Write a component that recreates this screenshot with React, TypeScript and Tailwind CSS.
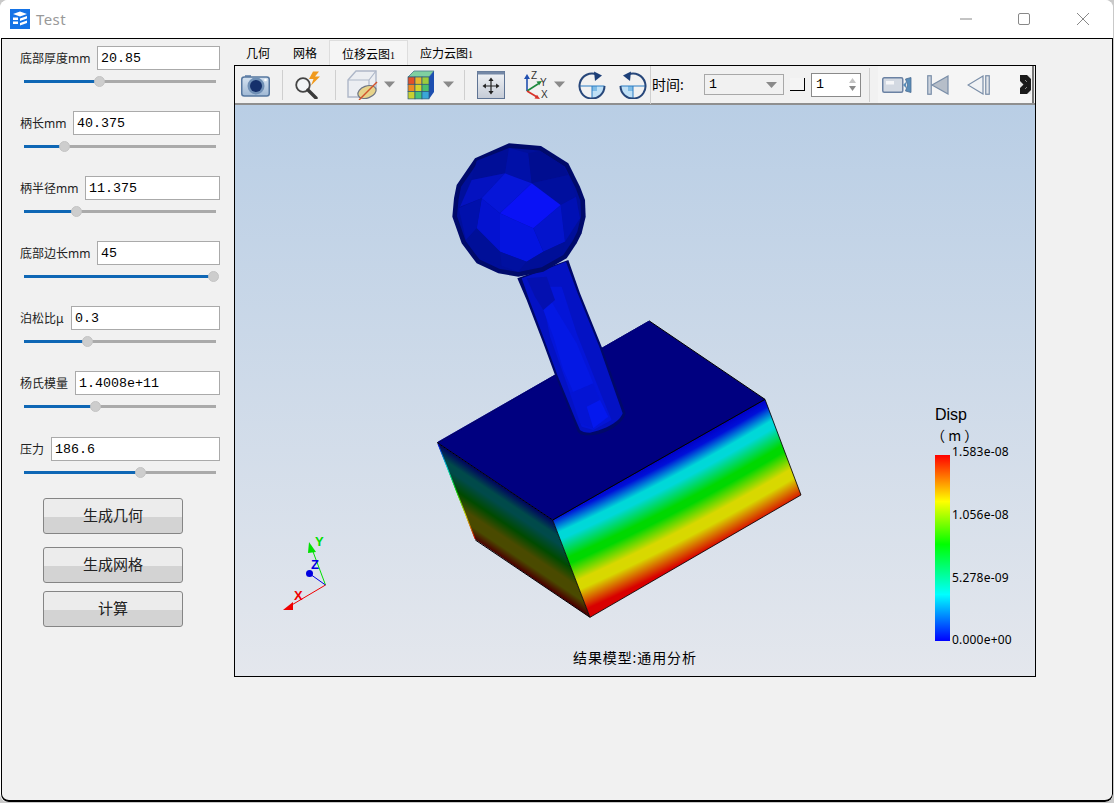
import { useState } from "react";

const fields = [
  { label: "底部厚度mm", value: "20.85", inputLeft: 97, handle: 99 },
  { label: "柄长mm", value: "40.375", inputLeft: 73, handle: 64 },
  { label: "柄半径mm", value: "11.375", inputLeft: 85, handle: 76 },
  { label: "底部边长mm", value: "45", inputLeft: 97, handle: 213 },
  { label: "泊松比μ", value: "0.3", inputLeft: 71, handle: 87 },
  { label: "杨氏模量", value: "1.4008e+11", inputLeft: 75, handle: 95 },
  { label: "压力", value: "186.6", inputLeft: 51, handle: 140 },
];

const ballOutline =
  "237,40 333,48 415,100 450,170 465,210 467,260 455,310 440,340 410,385 340,425 265,440 205,430 140,400 125,380 95,340 67,260 72,205 80,165 135,85";

// t runs from the top edge of the block's front face to its bottom edge
const bandStop = (t: number) => `${((6000 + 309 * t) / 6309) * 100}%`;

const frontBands: [number, string][] = [
  [0, "#0000c8"],
  [0.07, "#0010d8"],
  [0.21, "#00d8d8"],
  [0.28, "#00d8d8"],
  [0.47, "#00d800"],
  [0.53, "#00d800"],
  [0.71, "#d8d800"],
  [0.8, "#d8d800"],
  [1, "#d80000"],
];

function Field({ label, value, inputLeft, handle, last }: { label: string; value: string; inputLeft: number; handle: number; last: boolean }) {
  const [text, setText] = useState(value);
  const pos = handle - 24;
  return (
    <div className={last ? "mt-px" : ""}>
      <div className="flex items-center h-6">
        <span className="shrink-0 pt-px text-[12px] text-[#222] whitespace-nowrap" style={{ width: inputLeft - 20 }}>
          {label}
        </span>
        <input
          value={text}
          onChange={(e) => setText(e.target.value)}
          className="min-w-0 w-[200px] flex-1 h-6 bg-white border border-[#aaaaaa] pl-[3px] pt-px text-[13.33px] text-black font-['Liberation_Mono',monospace] outline-none"
        />
      </div>
      <div className="relative mt-[10px] ml-1 w-[192px] h-[3px] bg-[#aaaaaa]">
        <div className="h-full bg-[#0f67b5]" style={{ width: pos }} />
        <div className="absolute top-[-4px] w-[11px] h-[11px] rounded-full bg-[#cdcdcd] border border-[#c4c4c4]" style={{ left: pos - 5.5 }} />
      </div>
    </div>
  );
}

function ActionButton({ label, className }: { label: string; className?: string }) {
  return (
    <button className={`w-[140px] h-9 pb-px rounded-[3px] border border-[#858585] bg-[linear-gradient(to_bottom,#ececec_0,#ececec_18px,#d3d3d3_18px,#d3d3d3_100%)] text-[15px] text-[#222] ${className ?? ""}`}>
      {label}
    </button>
  );
}

function Sep({ className }: { className: string }) {
  return <div className={`w-px h-[30px] bg-[#cfcfcf] shrink-0 ${className}`} />;
}

function Caret({ className }: { className: string }) {
  return (
    <svg width="11" height="7" viewBox="0 0 11 7" className={`shrink-0 ${className}`}>
      <path d="M0 0.5h11L5.5 6.5z" fill="#8a8a8a" />
    </svg>
  );
}

function CameraIcon() {
  return (
    <svg width="29" height="24" viewBox="0 0 29 24" className="ml-[6px] shrink-0">
      <defs>
        <linearGradient id="cam" x1="0" y1="0" x2="0" y2="1">
          <stop offset="0" stopColor="#d5e2f0" />
          <stop offset="1" stopColor="#9fb8d4" />
        </linearGradient>
      </defs>
      <rect x="4" y="2" width="6" height="3" fill="#7d97b8" />
      <rect x="0.75" y="4" width="27.5" height="19" rx="2.5" fill="url(#cam)" stroke="#56779f" strokeWidth="1.5" />
      <circle cx="15" cy="13" r="8.5" fill="#6f8fb5" />
      <circle cx="15" cy="13" r="6" fill="#15306b" />
      <circle cx="24.5" cy="7" r="1.3" fill="#fff" />
    </svg>
  );
}

function SearchBoltIcon() {
  return (
    <svg width="30" height="28" viewBox="0 0 30 28" className="ml-[11px] shrink-0">
      <path d="M19 0.5l6 0-4 5h5l-9 9 2.5-6.5h-4.5z" fill="#f09a1e" />
      <circle cx="9" cy="14" r="6.8" fill="#f2f4f6" stroke="#444" strokeWidth="1.8" />
      <path d="M14 19l8 8" stroke="#3a3a3a" strokeWidth="3.4" strokeLinecap="round" />
    </svg>
  );
}

function BoxClipIcon() {
  return (
    <svg width="31" height="30" viewBox="0 0 31 30" className="ml-[11px] shrink-0">
      <path d="M1 10L9 1h20v18l-7 8H1z" fill="#eceef2" stroke="#aeb7c8" strokeWidth="1.4" />
      <path d="M1 10h21v17M22 10l7-9" fill="none" stroke="#aeb7c8" strokeWidth="1.2" />
      <ellipse cx="20" cy="22" rx="9.5" ry="6" transform="rotate(-20 20 22)" fill="#e7d38a" stroke="#6d7483" strokeWidth="1.2" />
      <path d="M12 30L30 12" stroke="#d2522b" strokeWidth="1.4" />
    </svg>
  );
}

function ColorCubeIcon() {
  const cells = [
    ["#e2502a", "#e8b62c", "#9ccc3c"],
    ["#ee8a22", "#d4d42c", "#4cc06c"],
    ["#c8d030", "#46c27a", "#3aa6d8"],
  ];
  return (
    <svg width="28" height="30" viewBox="0 0 28 30" className="ml-[12px] shrink-0">
      <path d="M1 7L7 1h20L22 7z" fill="#7fd0a0" stroke="#4a7a8a" strokeWidth="0.8" />
      <path d="M22 7l5-6v21l-5 7z" fill="#1d4fb0" />
      {cells.map((row, r) =>
        row.map((c, i) => <rect key={`${r}-${i}`} x={1 + i * 7} y={7 + r * 7.3} width="7" height="7.3" fill={c} stroke="#2b5a7a" strokeWidth="0.7" />)
      )}
    </svg>
  );
}

function FitIcon() {
  return (
    <svg width="28" height="28" viewBox="0 0 28 28" className="ml-[12px] shrink-0">
      <defs>
        <linearGradient id="fit" x1="0" y1="0" x2="0" y2="1">
          <stop offset="0" stopColor="#f2f4f7" />
          <stop offset="1" stopColor="#c5cbd6" />
        </linearGradient>
      </defs>
      <rect x="0.5" y="0.5" width="27" height="27" fill="url(#fit)" stroke="#5f7494" />
      <rect x="0.5" y="0.5" width="27" height="3" fill="#7488a6" />
      <path d="M14 9v12M8 15h12" stroke="#222" strokeWidth="1.2" />
      <path d="M14 6.5l2.6 3.4h-5.2zM14 23.5l2.6-3.4h-5.2zM5.5 15l3.4-2.6v5.2zM22.5 15l-3.4-2.6v5.2z" fill="#222" />
    </svg>
  );
}

function AxesIcon() {
  return (
    <svg width="28" height="28" viewBox="0 0 28 28" className="ml-[18px] shrink-0">
      <path d="M4 20V7" stroke="#2150b0" strokeWidth="1.6" />
      <path d="M4 3l-3 5h6z" fill="#2150b0" />
      <path d="M4 20l11-7" stroke="#1f8a3e" strokeWidth="1.6" />
      <path d="M19 10l-5.5 0.5 2.5 4z" fill="#1f8a3e" />
      <path d="M4 20l10 6" stroke="#d8322a" strokeWidth="1.6" />
      <path d="M17 28l-5.5-0.5 2.5-3.8z" fill="#d8322a" />
      <text x="8" y="8" fontSize="10" fontFamily="Liberation Sans, sans-serif" fill="#333">Z</text>
      <text x="17" y="15" fontSize="10" fontFamily="Liberation Sans, sans-serif" fill="#333">Y</text>
      <text x="18" y="27" fontSize="10" fontFamily="Liberation Sans, sans-serif" fill="#333">X</text>
    </svg>
  );
}

function RotateIcon({ flip, className }: { flip?: boolean; className: string }) {
  return (
    <svg width="28" height="28" viewBox="0 0 28 28" className={`shrink-0 ${className}`} style={flip ? { transform: "scaleX(-1)" } : undefined}>
      <path d="M14 15h12.5a12.5 12.5 0 0 1-12.5 12z" fill="#bfe0f6" />
      <path d="M14 15h5v5h-5z" fill="#7fbce6" />
      <path d="M1.5 15h25M14 15v12" stroke="#2a7cc4" strokeWidth="1" />
      <path d="M19 3.6A12.5 12.5 0 1 0 26.5 15" fill="none" stroke="#27477a" strokeWidth="2" />
      <path d="M16 0.5l8 4-7 5.5z" fill="#1d3f78" />
    </svg>
  );
}

function VideoIcon() {
  return (
    <svg width="30" height="18" viewBox="0 0 30 18" className="ml-1 shrink-0">
      <rect x="0.75" y="1.75" width="20" height="14.5" rx="1.5" fill="#d3d9e2" stroke="#6b82a3" strokeWidth="1.5" />
      <rect x="4" y="5" width="8" height="3.5" fill="#f5f6f8" />
      <path d="M21 9l3-3v6z" fill="#5a8db8" />
      <path d="M23.5 3L29 1.5v15L23.5 15l2-6z" fill="#5a8db8" stroke="#4c6c92" strokeWidth="0.8" />
    </svg>
  );
}

function FirstIcon() {
  return (
    <svg width="22" height="20" viewBox="0 0 22 20" className="ml-[15px] shrink-0">
      <rect x="0.75" y="0.75" width="3.5" height="18.5" fill="#cdd4de" stroke="#7a8ea8" strokeWidth="1.2" />
      <path d="M21 1v18L5 10z" fill="#b6bec9" stroke="#7a8ea8" strokeWidth="1.2" />
    </svg>
  );
}

function PrevIcon() {
  return (
    <svg width="23" height="20" viewBox="0 0 23 20" className="ml-[18px] shrink-0">
      <path d="M16 1v18L1 10z" fill="#f0f2f5" stroke="#7a8ea8" strokeWidth="1.2" />
      <rect x="18.75" y="0.75" width="3.5" height="18.5" fill="#e3e6ea" stroke="#7a8ea8" strokeWidth="1.2" />
    </svg>
  );
}

function MoreIcon() {
  return (
    <svg width="11" height="19" viewBox="0 0 11 19" className="ml-[30px] shrink-0">
      <path d="M0 0h11v19H0z" fill="#1a1a1a" />
      <path d="M0 6l3.5 3.5L0 13zM7 0h4v4zM7 19h4v-4z" fill="#e8e8e8" />
      <path d="M5 5l2 2M5 14l2-2" stroke="#888" />
    </svg>
  );
}

function Toolbar() {
  return (
    <div className="flex items-center h-[39px] bg-[#f1f1f1] border-b-2 border-[#8f8f8f] shrink-0">
      <CameraIcon />
      <Sep className="ml-[12px]" />
      <SearchBoltIcon />
      <Sep className="ml-[11px]" />
      <BoxClipIcon />
      <Caret className="ml-[6px]" />
      <ColorCubeIcon />
      <Caret className="ml-2" />
      <Sep className="ml-[10px]" />
      <FitIcon />
      <AxesIcon />
      <Caret className="ml-[3px]" />
      <RotateIcon className="ml-[13px]" />
      <RotateIcon flip className="ml-[13px]" />
      <Sep className="ml-[3px] h-[38px]" />
      <span className="ml-px text-[14px] text-black w-[52px] whitespace-nowrap">时间:</span>
      <div className="flex items-center justify-between w-20 h-[21px] bg-[#f1f1f1] border border-[#a8a8a8] pl-[4px] pr-[6px] text-[13.33px] text-black font-['Liberation_Mono',monospace]">
        1
        <svg width="11" height="6" viewBox="0 0 11 6"><path d="M0 0h11L5.5 6z" fill="#8a8a8a" /></svg>
      </div>
      <div className="ml-[6px] w-[15px] h-[13px] bg-[#f4f4f4] border-r border-b border-black" />
      <div className="ml-[6px] flex items-center justify-between w-[50px] h-6 bg-white border border-[#8a8a8a] pl-[4px] pr-[4px] text-[13.33px] text-black font-['Liberation_Mono',monospace]">
        1
        <svg width="7" height="13" viewBox="0 0 7 13"><path d="M3.5 0L7 5H0z" fill="#c4c4c4" /><path d="M3.5 13L7 8H0z" fill="#8a8a8a" /></svg>
      </div>
      <Sep className="ml-2 h-[34px]" />
      <div className="ml-2 flex items-center w-[156px] h-full bg-[#f5f5f5] border-r-2 border-[#777777]">
        <VideoIcon />
        <FirstIcon />
        <PrevIcon />
        <MoreIcon />
      </div>
    </div>
  );
}

function Scene() {
  const bright = ["#0000d8", "#00d8d8", "#00d800", "#d8d800", "#d80000"];
  return (
    <svg className="absolute inset-0" width="800" height="571" viewBox="235 105 800 571">
      <defs>
        <radialGradient id="front" gradientUnits="userSpaceOnUse" cx="-2106.3" cy="-4322.3" r="6309">
          {frontBands.map(([t, c]) => (
            <stop key={t} offset={bandStop(t)} stopColor={c} />
          ))}
        </radialGradient>
        <linearGradient id="side" gradientUnits="userSpaceOnUse" x1="22" y1="938" x2="-77" y2="1086">
          <stop offset="0" stopColor="#000060" />
          <stop offset="0.18" stopColor="#004a4a" />
          <stop offset="0.28" stopColor="#004a4a" />
          <stop offset="0.5" stopColor="#004a00" />
          <stop offset="0.7" stopColor="#4a4a00" />
          <stop offset="0.85" stopColor="#4a4a00" />
          <stop offset="1" stopColor="#4a0000" />
        </linearGradient>
        <linearGradient id="sideEdge" gradientUnits="userSpaceOnUse" x1="22" y1="938" x2="135" y2="1228">
          {bright.map((c, i) => (
            <stop key={c} offset={i / 4} stopColor={c} />
          ))}
        </linearGradient>
      </defs>

      {/* model, in coordinates of the 3x crop */}
      <g transform="translate(430 130) scale(0.33333)">
        <polygon points="22,938 368,1170 480,1462 135,1228" fill="url(#side)" />
        <line x1="24" y1="942" x2="135" y2="1226" stroke="url(#sideEdge)" strokeWidth="3" />
        <polygon points="368,1170 1005,808 1113,1095 480,1462" fill="url(#front)" stroke="#000" strokeWidth="2.5" />
        <polygon points="22,938 658,573 1005,808 368,1170" fill="#000080" stroke="#000" strokeWidth="3" />
        <line x1="24" y1="936" x2="658" y2="573" stroke="#0000d0" strokeWidth="2" />
        <line x1="136" y1="1230" x2="480" y2="1462" stroke="#000" strokeWidth="3" />

        {/* handle */}
        <path d="M262 445L415 390 450 490 515 650 587 850C580 880 530 915 480 916 465 916 450 915 443 905L430 870 375 735 340 640 290 510z" fill="#00086a" />
        <path d="M275 445L408 395 443 490 508 650 578 850C570 875 525 900 480 908 465 908 455 905 450 900L437 870 382 735 347 640 298 510z" fill="#0412c4" />
        <polygon points="330,470 395,470 440,610 520,810 545,870 490,900 455,890 410,760 360,620" fill="#0415d8" />
        <polygon points="350,490 385,550 440,640 490,760 530,860 490,895 450,830 400,720 370,620 340,540" fill="#0418e4" />
        <polygon points="290,445 350,440 375,510 340,540 315,500" fill="#0410b0" />
        <polygon points="420,790 490,760 530,860 490,895 450,880" fill="#0414d4" />
        <polygon points="470,830 510,810 535,860 490,895" fill="#0418ee" />

        {/* ball */}
        <polygon points={ballOutline} fill="#000a6a" />
        <polygon points={ballOutline} transform="translate(267 240) scale(0.93) translate(-267 -240)" fill="#000f9a" />
        <polygon points="140,92 237,54 225,130 125,150" fill="#000e98" />
        <polygon points="237,54 295,70 305,160 225,130" fill="#0010a8" />
        <polygon points="295,70 330,62 400,108 415,135 305,160" fill="#000d90" />
        <polygon points="305,160 415,135 438,200 392,225" fill="#000f9e" />
        <polygon points="392,225 438,200 450,265 405,335" fill="#0010b4" />
        <polygon points="392,225 310,295 340,365 405,335" fill="#0414cc" />
        <polygon points="310,295 210,250 210,365 290,395 340,365" fill="#0414e0" />
        <polygon points="210,250 155,205 140,295 210,365" fill="#0412d0" />
        <polygon points="155,205 225,130 125,150 90,230" fill="#0412c0" />
        <polygon points="86,235 155,205 140,295 108,330" fill="#0010ac" />
        <polygon points="140,295 210,365 215,408 150,385 108,330" fill="#000f98" />
        <polygon points="210,365 290,395 265,425 215,408" fill="#0010a0" />
        <polygon points="290,395 340,365 405,335 395,370 330,410 265,425" fill="#000f98" />
        <polygon points="225,130 305,160 210,250 155,205" fill="#0616d8" />
        <polygon points="305,160 392,225 310,295 210,250" fill="#0a12f6" />
      </g>

      {/* axis triad */}
      <line x1="325.5" y1="585" x2="312" y2="549" stroke="#00e000" />
      <polygon points="309,542 316,552 308,553" fill="#00e000" />
      <line x1="325.5" y1="585" x2="310" y2="574" stroke="#0000e0" />
      <circle cx="309.5" cy="573.5" r="3.5" fill="#0000e0" />
      <line x1="325.5" y1="585" x2="290" y2="606" stroke="#f00000" />
      <polygon points="283,610 293,602 293,610" fill="#f00000" />
      <text x="315" y="546" fontSize="13" fontWeight="700" fontFamily="Liberation Sans, sans-serif" fill="#00e000">Y</text>
      <text x="311" y="569" fontSize="13" fontWeight="700" fontFamily="Liberation Sans, sans-serif" fill="#0000e0">Z</text>
      <text x="294" y="600" fontSize="13" fontWeight="700" fontFamily="Liberation Sans, sans-serif" fill="#f00000">X</text>
    </svg>
  );
}

function Legend() {
  const ticks = [
    { text: "1.583e-08", top: 339 },
    { text: "1.056e-08", top: 402 },
    { text: "5.278e-09", top: 465 },
    { text: "0.000e+00", top: 527 },
  ];
  return (
    <>
      <div className="absolute left-[700px] top-[301px] text-[16px] leading-[18px] text-black font-['Liberation_Sans',sans-serif]">Disp</div>
      <div className="absolute left-[696px] top-[321px] text-[14px] leading-[18px] text-black whitespace-pre font-['Noto_Sans_CJK_SC',sans-serif]">（ m ）</div>
      <div className="absolute left-[700px] top-[350px] w-[15px] h-[186px] bg-[linear-gradient(to_bottom,#ff0000,#ffff00_25%,#00ff00_48%,#00ffff_75%,#0000ff)]" />
      {ticks.map((t) => (
        <div key={t.text} style={{ top: t.top }} className="absolute left-[717px] text-[12px] tracking-[0.2px] leading-[16px] text-black">
          {t.text}
        </div>
      ))}
    </>
  );
}

export default function App() {
  return (
    <div className="w-[1114px] h-[803px] bg-[#c9c9c9] overflow-hidden font-['Noto_Sans','Noto_Sans_CJK_SC',sans-serif]">
      <div className="flex flex-col w-[1113px] h-[802px] rounded-lg bg-white overflow-hidden">
        <div className="flex items-center h-[38px] shrink-0 bg-white pl-[10px]">
          <svg width="20" height="20" viewBox="0 0 20 20">
            <rect width="20" height="20" fill="#1473e6" />
            <path d="M3 5l7-2.5L17 5l-7 2.5zM3 8.5h5v2.5H3zM3 12.5h5V15H3zM10 9.5l7-2.5v2.5l-7 2.5zM10 14l7-2.5V14l-7 2.5z" fill="#fff" />
          </svg>
          <span className="ml-[6px] text-[15px] text-[#999999] tracking-[0.4px]">Test</span>
          <div className="ml-auto flex items-center pr-[24px]">
            <svg width="12" height="12" viewBox="0 0 12 12"><path d="M0 6h12" stroke="#888" /></svg>
            <svg width="12" height="12" viewBox="0 0 12 12" className="ml-[46px]"><rect x="0.5" y="0.5" width="11" height="11" rx="1.5" fill="none" stroke="#888" /></svg>
            <svg width="12" height="12" viewBox="0 0 12 12" className="ml-[47px]"><path d="M0 0l12 12M12 0L0 12" stroke="#888" /></svg>
          </div>
        </div>

        <div className="flex flex-1 min-h-0 ml-px border border-black border-b-2 rounded-b-lg bg-[#f1f1f1]">
          <div className="w-[232px] shrink-0 pt-[7px] pl-[18px] pr-[14px]">
            <div className="flex flex-col gap-[28px]">
              {fields.map((f, i) => (
                <Field key={f.label} {...f} last={i === fields.length - 1} />
              ))}
            </div>
            <div className="flex flex-col items-start mt-[24px] ml-[23px]">
              <ActionButton label="生成几何" />
              <ActionButton label="生成网格" className="mt-[13px]" />
              <ActionButton label="计算" className="mt-2" />
            </div>
          </div>

          <div className="flex flex-col">
            <div className="flex items-end h-[26px] text-[12px] text-black">
              <span className="pl-3 pr-[11px] h-[24px] leading-[26px]">几何</span>
              <span className="px-3 h-[24px] leading-[26px]">网格</span>
              <span className="px-3 h-[25px] leading-[27px] bg-[#f5f5f5] border border-b-0 border-[#dddddd]">
                位移云图<span className="text-[10px] font-['Liberation_Serif',serif]">1</span>
              </span>
              <span className="px-3 h-[24px] leading-[26px]">
                应力云图<span className="text-[10px] font-['Liberation_Serif',serif]">1</span>
              </span>
            </div>
            <div className="flex flex-col w-[802px] h-[612px] border border-black">
              <Toolbar />
              <div className="relative flex-1 bg-[linear-gradient(to_bottom,#b9cee5,#e4e7ed)]">
                <Scene />
                <Legend />
                <div className="absolute left-[338px] top-[543px] text-[14px] tracking-[0.9px] leading-[20px] text-black whitespace-nowrap">结果模型:通用分析</div>
              </div>
            </div>
          </div>
        </div>
      </div>
    </div>
  );
}
